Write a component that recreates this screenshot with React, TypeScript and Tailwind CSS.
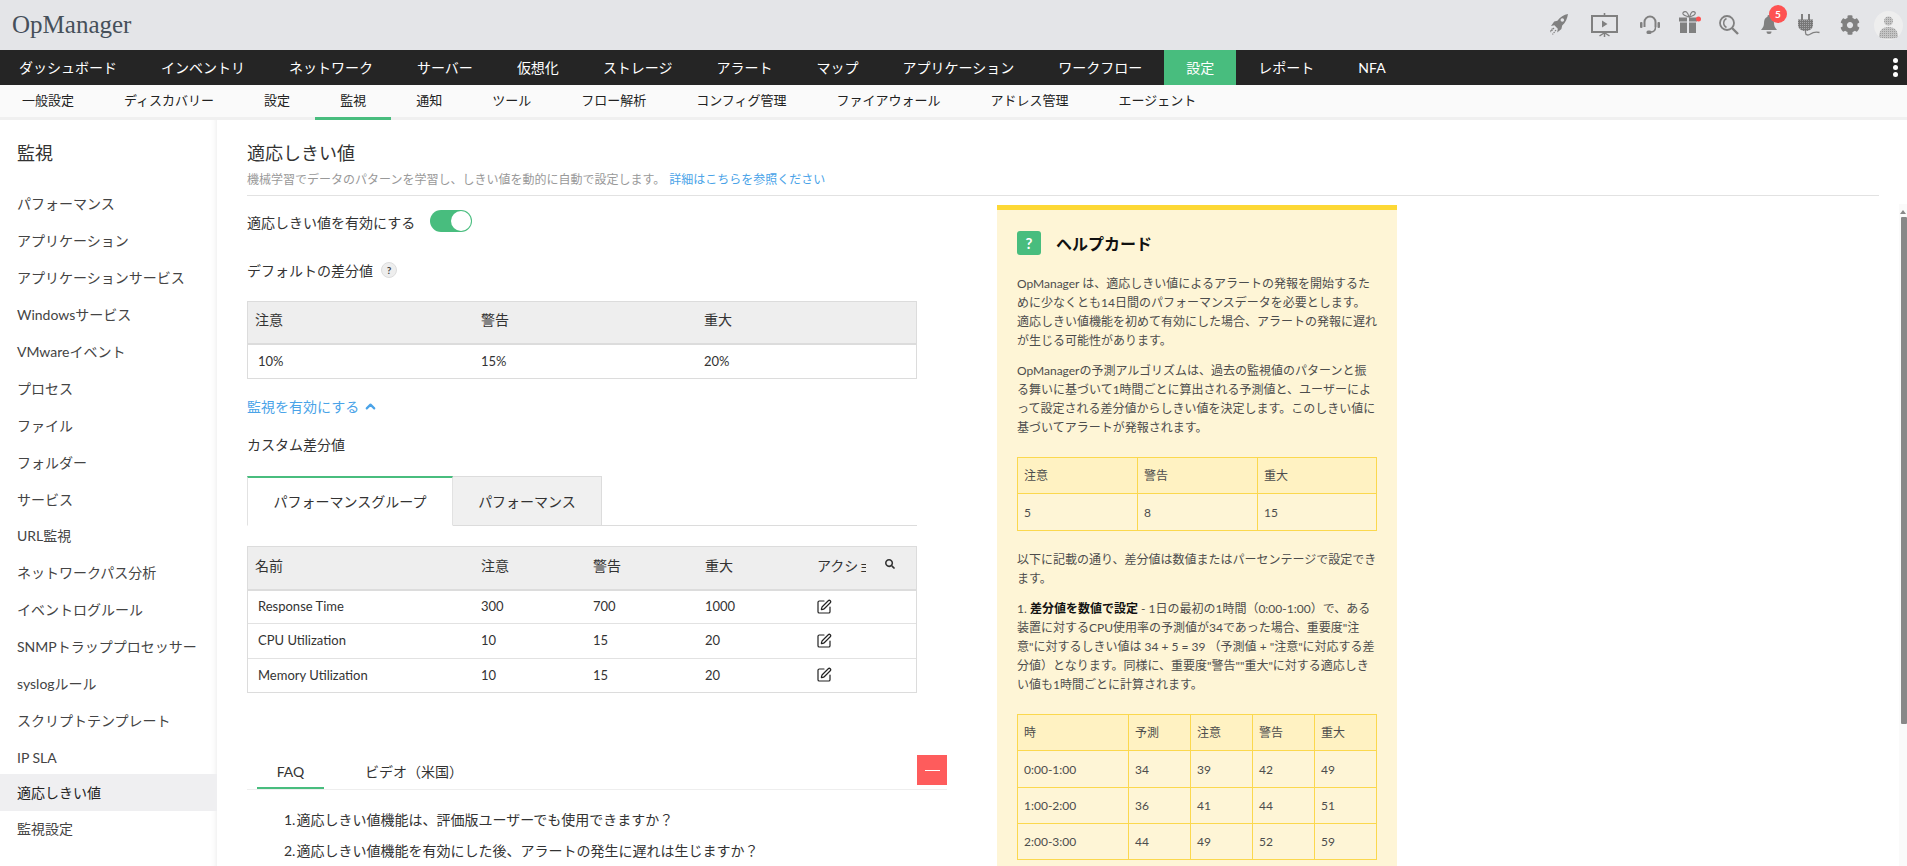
import { ChevronUp, SquarePen } from "lucide-react";
import { FaCog, FaSearch } from "react-icons/fa";

const mainNav = ["ダッシュボード", "インベントリ", "ネットワーク", "サーバー", "仮想化", "ストレージ", "アラート", "マップ", "アプリケーション", "ワークフロー", "設定", "レポート", "NFA"];
const subNav = ["一般設定", "ディスカバリー", "設定", "監視", "通知", "ツール", "フロー解析", "コンフィグ管理", "ファイアウォール", "アドレス管理", "エージェント"];
const sideItems = ["パフォーマンス", "アプリケーション", "アプリケーションサービス", "Windowsサービス", "VMwareイベント", "プロセス", "ファイル", "フォルダー", "サービス", "URL監視", "ネットワークパス分析", "イベントログルール", "SNMPトラッププロセッサー", "syslogルール", "スクリプトテンプレート", "IP SLA", "適応しきい値", "監視設定"];
const customRows = [
  { name: "Response Time", a: "300", b: "700", c: "1000", h: "h-[33px]" },
  { name: "CPU Utilization", a: "10", b: "15", c: "20", h: "h-[35px]" },
  { name: "Memory Utilization", a: "10", b: "15", c: "20", h: "h-[34px]" },
];
const forecastRows = [
  ["0:00-1:00", "34", "39", "42", "49"],
  ["1:00-2:00", "36", "41", "44", "51"],
  ["2:00-3:00", "44", "49", "52", "59"],
];

function TopIcons() {
  return (
    <div className="flex items-center pr-[4px] text-[#808080]">
      {/* rocket */}
      <svg width="18" height="22" viewBox="0 0 18 22" fill="currentColor">
        <path d="M18 0c-4 .8-8 3-10.600 6.800L4.200 7.600 1 12l3.400-.8 3.400 3.600-.6 3.600 4.200-3.400.8-3.400C15.400 8.600 17.400 4.600 18 0z" />
        <circle cx="12.300" cy="6" r="1.800" fill="#e4e5e8" />
        <path d="M4 14l-3.500 4M6 16l-3.500 4.500M2.500 14.500l-2 2.500" stroke="currentColor" strokeWidth="1.200" strokeDasharray="1.500 .8" fill="none" />
      </svg>
      {/* training screen */}
      <svg className="ml-[23px]" width="27" height="24" viewBox="0 0 27 24" fill="none" stroke="currentColor">
        <path d="M.5 3h26M13.500 0v3" strokeWidth="1.600" />
        <rect x="1" y="3" width="25" height="16" strokeWidth="2" />
        <path d="M11 7.500l5.500 3.500-5.500 3.500z" fill="currentColor" stroke="none" />
        <path d="M13.500 19v5M13 20l-4.500 3M14 20l4.500 3" strokeWidth="1.500" />
      </svg>
      {/* headset */}
      <svg className="ml-[22px]" width="20" height="20" viewBox="0 0 20 20" fill="none" stroke="currentColor">
        <path d="M4.500 12V7a5.500 5.500 0 0111 0v5" strokeWidth="2" />
        <rect x="0" y="7" width="2.500" height="6" rx="1" fill="currentColor" stroke="none" />
        <rect x="17.500" y="7" width="2.500" height="6" rx="1" fill="currentColor" stroke="none" />
        <path d="M15.500 12c0 3-2 5-5 5" strokeWidth="1.500" />
        <rect x="6.500" y="15.500" width="5" height="3.500" rx="1.500" fill="currentColor" stroke="none" />
      </svg>
      {/* gift */}
      <svg className="ml-[19px] mb-[7px]" width="22" height="22" viewBox="0 0 22 22" fill="currentColor">
        <path d="M10 6C8 5 5 5 4 3c-.5-2 2-3 3.500-2C9 2 9.500 4 10 6zM10.500 6c1-2 1-4 2.500-5 1.500-1 4 0 3 2-1 2-3.500 2-5.500 3z" fill="none" stroke="currentColor" strokeWidth="1.200" />
        <rect x="0" y="6.500" width="18" height="4" />
        <rect x="1" y="11.500" width="16" height="10.500" />
        <rect x="8" y="6.500" width="2" height="15.500" fill="#e4e5e8" />
        <circle cx="19.500" cy="8" r="2.500" fill="#fe5252" />
      </svg>
      {/* search */}
      <svg className="ml-[18px]" width="20" height="20" viewBox="0 0 20 20" fill="none" stroke="currentColor">
        <circle cx="8" cy="8" r="7" strokeWidth="1.800" />
        <path d="M7.500 3.500a5 5 0 000 9" strokeWidth="1.400" />
        <path d="M13 13l6 6" strokeWidth="2.400" />
      </svg>
      {/* bell with badge */}
      <div className="relative ml-[22px] h-[20px] w-[16px]">
        <svg width="16" height="20" viewBox="0 0 16 20" fill="currentColor">
          <path d="M8 0a1.500 1.500 0 011.500 1.700C12 2.500 13 5 13 8c0 3 1 4.500 3 7H0c2-2.500 3-4 3-7 0-3 1-5.500 3.500-6.300A1.500 1.500 0 018 0z" />
          <path d="M5.500 16.500h5a2.500 2.500 0 01-5 0z" />
        </svg>
        <span className="absolute left-[8px] top-[-10px] flex h-[18px] w-[18px] items-center justify-center rounded-full bg-[#fe5252] text-[10px] font-bold text-white">5</span>
      </div>
      {/* plug */}
      <svg className="ml-[21px]" width="22" height="22" viewBox="0 0 22 22">
        <defs>
          <pattern id="plugDots" width="2" height="2" patternUnits="userSpaceOnUse">
            <rect width="2" height="2" fill="#777" />
            <rect width="1" height="1" fill="#a5a5a8" />
          </pattern>
        </defs>
        <rect x="3" y="0" width="2" height="6" fill="#808080" />
        <rect x="10" y="0" width="2" height="6" fill="#808080" />
        <path d="M0 5.500h15v5c0 4-3 6.500-7.500 6.500S0 14.500 0 10.500z" fill="url(#plugDots)" />
        <path d="M7.500 17v1.500c0 3 3 3 5 1.500s4-2.500 9-1.500" fill="none" stroke="#808080" strokeWidth="1.300" />
      </svg>
      <FaCog className="ml-[20px]" size={20} />
      {/* avatar */}
      <svg className="ml-[14px]" width="29" height="29" viewBox="0 0 29 29">
        <defs>
          <pattern id="avatarDots" width="2" height="2" patternUnits="userSpaceOnUse">
            <rect width="2" height="2" fill="#c4c4c4" />
            <rect width="1" height="1" fill="#9c9c9c" />
          </pattern>
        </defs>
        <circle cx="14.500" cy="14.500" r="14.500" fill="#eeeeee" />
        <circle cx="14.500" cy="10" r="4.500" fill="url(#avatarDots)" />
        <path d="M5 26c0-6 3-10 9.500-10S24 20 24 26c-3 2-16 2-19 0z" fill="url(#avatarDots)" />
      </svg>
    </div>
  );
}

function Sidebar() {
  return (
    <aside className="w-[217px] shrink-0 shadow-[inset_-6px_0_6px_-6px_rgba(0,0,0,0.1)]">
      <h2 className="pl-[17px] pt-[21px] text-[18px] leading-[24px] text-[#333]">監視</h2>
      <ul className="mt-[21.5px]">
        {sideItems.map((item) => (
          <li
            key={item}
            className={
              item === "適応しきい値"
                ? "-mt-[3px] flex h-[37px] items-center bg-[#efeff1] pl-[17px] text-[14px] text-[#222]"
                : "flex h-[36.9px] items-center pb-[2px] pl-[17px] text-[14px] text-[#444]"
            }
          >
            {item}
          </li>
        ))}
      </ul>
    </aside>
  );
}

function DefaultTable() {
  return (
    <div className="mt-[21px] w-[670px] border border-[#dcdcdc]">
      <table className="w-full table-fixed text-[13px] text-[#333]">
        <colgroup>
          <col className="w-[233px]" />
          <col className="w-[223px]" />
          <col />
        </colgroup>
        <thead>
          <tr className="h-[42px] border-b-2 border-[#dcdcdc] bg-[#eeeeee] text-left text-[14px]">
            <th className="pb-[6px] pl-[7px] font-normal">注意</th>
            <th className="pb-[6px] font-normal">警告</th>
            <th className="pb-[6px] font-normal">重大</th>
          </tr>
        </thead>
        <tbody>
          <tr className="h-[34px]">
            <td className="pl-[10px]">10%</td>
            <td>15%</td>
            <td>20%</td>
          </tr>
        </tbody>
      </table>
    </div>
  );
}

function CustomTable() {
  return (
    <div className="mt-[20px] w-[670px] border border-[#dcdcdc]">
      <table className="w-full table-fixed text-[13px] text-[#333]">
        <colgroup>
          <col className="w-[233px]" />
          <col className="w-[112px]" />
          <col className="w-[112px]" />
          <col className="w-[112px]" />
          <col />
        </colgroup>
        <thead>
          <tr className="h-[43px] border-b-2 border-[#dcdcdc] bg-[#eeeeee] text-left text-[14px]">
            <th className="pb-[6px] pl-[7px] font-normal">名前</th>
            <th className="pb-[6px] font-normal">注意</th>
            <th className="pb-[6px] font-normal">警告</th>
            <th className="pb-[6px] font-normal">重大</th>
            <th className="pb-[6px] font-normal">
              <div className="flex items-center">
                <span className="w-[49px] overflow-hidden whitespace-nowrap">アクション</span>
                <FaSearch className="ml-[19px] mb-[2px] text-[#333]" size={10} />
              </div>
            </th>
          </tr>
        </thead>
        <tbody>
          {customRows.map((row, i) => (
            <tr key={row.name} className={`${row.h} ${i < 2 ? "border-b border-[#e2e2e2]" : ""}`}>
              <td className="pl-[10px]">{row.name}</td>
              <td>{row.a}</td>
              <td>{row.b}</td>
              <td>{row.c}</td>
              <td>
                <SquarePen size={16} strokeWidth={1.8} className="-ml-px text-[#222]" />
              </td>
            </tr>
          ))}
        </tbody>
      </table>
    </div>
  );
}

function HelpCard() {
  return (
    <section className="mt-[9px] w-[400px] shrink-0 border-t-[5px] border-[#fdd835] bg-[#fef5d6] px-[20px] pb-[30px] pt-[21px] text-[12px] leading-[19px] text-[#4d4d4d]">
      <div className="flex items-center">
        <span className="flex size-[24px] items-center justify-center rounded-[3px] bg-[#48bd7e] text-[15px] font-bold leading-none text-white">?</span>
        <h3 className="ml-[15px] text-[16px] font-bold text-[#111]">ヘルプカード</h3>
      </div>
      <p className="mt-[19px] whitespace-nowrap">
        OpManager は、適応しきい値によるアラートの発報を開始するた<br />
        めに少なくとも14日間のパフォーマンスデータを必要とします。<br />
        適応しきい値機能を初めて有効にした場合、アラートの発報に遅れ<br />
        が生じる可能性があります。
      </p>
      <p className="mt-[11px] whitespace-nowrap">
        OpManagerの予測アルゴリズムは、過去の監視値のパターンと振<br />
        る舞いに基づいて1時間ごとに算出される予測値と、ユーザーによ<br />
        って設定される差分値からしきい値を決定します。このしきい値に<br />
        基づいてアラートが発報されます。
      </p>
      <table className="mt-[20px] w-full table-fixed border-collapse text-left">
        <colgroup>
          <col className="w-[120px]" />
          <col className="w-[120px]" />
          <col />
        </colgroup>
        <thead>
          <tr className="h-[36px] bg-[#fff2c2]">
            {["注意", "警告", "重大"].map((h) => (
              <th key={h} className="border border-[#fbd84e] pl-[6px] font-normal">{h}</th>
            ))}
          </tr>
        </thead>
        <tbody>
          <tr className="h-[37px]">
            {["5", "8", "15"].map((v) => (
              <td key={v} className="border border-[#fbd84e] pl-[6px]">{v}</td>
            ))}
          </tr>
        </tbody>
      </table>
      <p className="mt-[19px] whitespace-nowrap">
        以下に記載の通り、差分値は数値またはパーセンテージで設定でき<br />
        ます。
      </p>
      <p className="mt-[11px] whitespace-nowrap">
        1. <b className="text-[#111]">差分値を数値で設定</b> - 1日の最初の1時間（0:00-1:00）で、ある<br />
        装置に対するCPU使用率の予測値が34であった場合、重要度"注<br />
        意"に対するしきい値は 34 + 5 = 39 （予測値 + "注意"に対応する差<br />
        分値）となります。同様に、重要度"警告""重大"に対する適応しき<br />
        い値も1時間ごとに計算されます。
      </p>
      <table className="mt-[20px] w-full table-fixed border-collapse text-left">
        <colgroup>
          <col className="w-[111px]" />
          <col className="w-[62px]" />
          <col className="w-[62px]" />
          <col className="w-[62px]" />
          <col />
        </colgroup>
        <thead>
          <tr className="h-[36px] bg-[#fff2c2]">
            {["時", "予測", "注意", "警告", "重大"].map((h) => (
              <th key={h} className="border border-[#fbd84e] pl-[6px] font-normal">{h}</th>
            ))}
          </tr>
        </thead>
        <tbody>
          {forecastRows.map((row, i) => (
            <tr key={row[0]} className={i === 0 ? "h-[37px]" : "h-[36px]"}>
              {row.map((v, j) => (
                <td key={j} className="border border-[#fbd84e] pl-[6px]">{v}</td>
              ))}
            </tr>
          ))}
        </tbody>
      </table>
    </section>
  );
}

export default function App() {
  return (
    <div className="flex h-screen flex-col overflow-hidden bg-white [font-family:Lato,'Noto_Sans_CJK_JP',sans-serif]">
      <header className="flex h-[50px] shrink-0 items-center justify-between bg-[#e4e5e8] pl-[12px]">
        <span className="text-[25px] text-[#46505a] [font-family:'Liberation_Serif',serif]">OpManager</span>
        <TopIcons />
      </header>

      <nav className="relative flex h-[35px] shrink-0 items-stretch bg-[#252525] pl-[19px] text-[14px] text-white">
        {mainNav.map((item, i) => (
          <a
            key={item}
            className={`flex items-center pr-[22px] ${i === 0 ? "" : "pl-[22px]"} ${item === "設定" ? "bg-[#48bd7e]" : ""}`}
          >
            {item}
          </a>
        ))}
        <div className="absolute right-[9px] top-[8px] flex flex-col gap-[2px]">
          <span className="size-[5px] rounded-full bg-white" />
          <span className="size-[5px] rounded-full bg-white" />
          <span className="size-[5px] rounded-full bg-white" />
        </div>
      </nav>

      <nav className="flex h-[35px] shrink-0 items-stretch border-b-[3px] border-[#f0f0f0] bg-[#fafafa] pl-[22px] text-[13px] text-[#222]">
        {subNav.map((item, i) => (
          <a
            key={item + i}
            className={`-mb-[3px] flex items-center border-b-[3px] pr-[25px] ${i === 0 ? "" : "pl-[25px]"} ${item === "監視" ? "border-[#48bd7e]" : "border-transparent"}`}
          >
            {item}
          </a>
        ))}
      </nav>

      <div className="flex min-h-0 flex-1">
        <Sidebar />

        <main className="min-w-0 flex-1 overflow-hidden pl-[30px] pr-[20px]">
          <div className="border-b border-[#e2e2e2] pb-[6px] pt-[21px]">
            <h1 className="text-[18px] leading-[24px] text-[#333]">適応しきい値</h1>
            <p className="mt-[6px] text-[12px] leading-[18px] text-[#999]">
              機械学習でデータのパターンを学習し、しきい値を動的に自動で設定します。
              <a className="ml-[4px] text-[#4aa3e8]">詳細はこちらを参照ください</a>
            </p>
          </div>

          <div className="flex items-start">
            <div className="w-[700px] shrink-0 pt-[14px] text-[14px] text-[#333]">
              <div className="flex h-[22px] items-center">
                <span className="mt-[3px]">適応しきい値を有効にする</span>
                <span className="ml-[15px] flex h-[22px] w-[42px] items-center justify-end rounded-full bg-[#48bd7e] pr-[1px]">
                  <span className="size-[20px] rounded-full bg-white" />
                </span>
              </div>
              <div className="mt-[28px] flex h-[20px] items-center">
                <span>デフォルトの差分値</span>
                <span className="ml-[8px] flex size-[16px] items-center justify-center rounded-full border border-[#ddd] bg-[#eee] text-[10px] font-bold text-[#444]">?</span>
              </div>
              <DefaultTable />
              <div className="mt-[17px] flex h-[20px] items-center text-[#4aa3e8]">
                <span>監視を有効にする</span>
                <ChevronUp className="ml-[4px]" size={15} strokeWidth={3.5} />
              </div>
              <div className="mt-[18px] h-[20px]">カスタム差分値</div>

              <div className="mt-[22px] flex h-[50px] w-[670px] border-b border-[#dcdcdc]">
                <div className="-mb-px flex w-[206px] items-center justify-center border-x border-b border-t-2 border-x-[#e2e2e2] border-b-white border-t-[#48bd7e] bg-white">
                  パフォーマンスグループ
                </div>
                <div className="flex w-[149px] items-center justify-center border-r border-t border-[#dcdcdc] bg-[#f0f0f0]">
                  パフォーマンス
                </div>
              </div>

              <CustomTable />

              <div className="mt-[62px] flex h-[35px] items-start border-b border-[#eeeeee]">
                <a className="ml-[10px] flex h-[34px] w-[67px] items-center justify-center border-b-2 border-[#48bd7e]">FAQ</a>
                <a className="ml-[41px] flex h-[32px] items-center">ビデオ（米国）</a>
                <button className="ml-auto flex size-[30px] items-center justify-center bg-[#fe5c5c]">
                  <span className="h-px w-[15px] bg-white" />
                </button>
              </div>
              <ol className="mt-[19px] flex flex-col gap-[9px] pl-[37px] leading-[22px]">
                <li><span className="mr-px">1.</span>適応しきい値機能は、評価版ユーザーでも使用できますか？</li>
                <li><span className="mr-px">2.</span>適応しきい値機能を有効にした後、アラートの発生に遅れは生じますか？</li>
              </ol>
            </div>
            <div className="ml-[50px]">
              <HelpCard />
            </div>
          </div>
        </main>

        <div className="mt-[84px] flex w-[8px] shrink-0 flex-col items-end bg-[#fafafa]">
          <span className="mr-[1px] mt-[6px] size-0 border-x-[3px] border-b-[4px] border-x-transparent border-b-[#888]" />
          <span className="mt-[3px] h-[507px] w-[6px] rounded-[1px] bg-[#888]" />
        </div>
      </div>
    </div>
  );
}
